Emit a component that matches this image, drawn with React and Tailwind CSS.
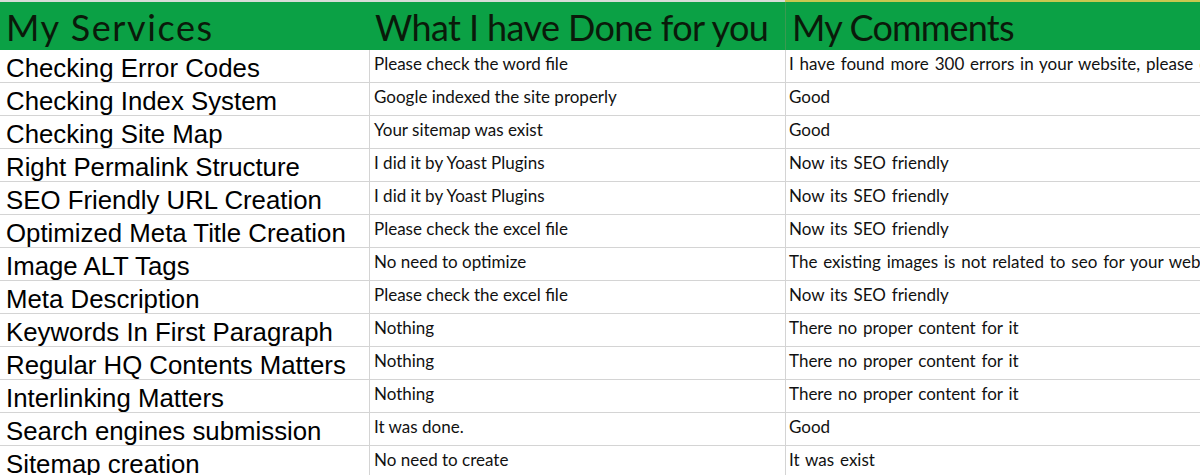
const rows = [
  ["Checking Error Codes", "Please check the word file", "I have found more 300 errors in your website, please check the word file"],
  ["Checking Index System", "Google indexed the site properly", "Good"],
  ["Checking Site Map", "Your sitemap was exist", "Good"],
  ["Right Permalink Structure", "I did it by Yoast Plugins", "Now its SEO friendly"],
  ["SEO Friendly URL Creation", "I did it by Yoast Plugins", "Now its SEO friendly"],
  ["Optimized Meta Title Creation", "Please check the excel file", "Now its SEO friendly"],
  ["Image ALT Tags", "No need to optimize", "The existing images is not related to seo for your website"],
  ["Meta Description", "Please check the excel file", "Now its SEO friendly"],
  ["Keywords In First Paragraph", "Nothing", "There no proper content for it"],
  ["Regular HQ Contents Matters", "Nothing", "There no proper content for it"],
  ["Interlinking Matters", "Nothing", "There no proper content for it"],
  ["Search engines submission", "It was done.", "Good"],
  ["Sitemap creation", "No need to create", "It was exist"],
]

const calibri = "font-['Lato','Open_Sans',sans-serif]"

export default function App() {
  return (
    <div className="h-[475px] w-[1200px] overflow-hidden bg-white">
      <div className="grid grid-cols-[369px_416px_415px]">
        <div className="h-[2px] bg-[#d8dcd8]" />
        <div className="h-[2px] bg-[#d8dcd8]" />
        <div className="h-[2px] bg-[#c8c850]" />
      </div>
      <div className={`grid h-[48px] grid-cols-[369px_416px_415px] bg-[#0ba145] text-[36px] leading-[50px] text-[#0a1a0a] ${calibri}`}>
        <div className="overflow-hidden whitespace-nowrap pl-[6px] tracking-[1.6px]">My Services</div>
        <div className="overflow-hidden whitespace-nowrap pl-[6px] tracking-[-0.6px]">What I have Done for you</div>
        <div className="overflow-hidden whitespace-nowrap border-l border-[#3a9a50] pl-[6px] tracking-[-0.8px]">My Comments</div>
      </div>
      {rows.map(([service, done, comment], i) => (
        <div
          key={i}
          className="grid h-[33px] grid-cols-[369px_416px_415px] border-b border-[#d4d4d4]"
        >
          <div className="overflow-hidden whitespace-nowrap pl-[6px] pt-[4px] font-['Liberation_Sans',Arial,sans-serif] text-[25.8px] leading-[28px] text-black">
            {service}
          </div>
          <div className={`overflow-hidden whitespace-nowrap border-l border-[#d4d4d4] pl-[4px] pt-[3px] text-[17px] leading-[22px] text-[#111] ${calibri}`}>
            {done}
          </div>
          <div className={`overflow-hidden whitespace-nowrap border-l border-[#d4d4d4] pl-[3px] pt-[3px] text-[17px] leading-[22px] text-[#111] [word-spacing:1.5px] ${calibri}`}>
            {comment}
          </div>
        </div>
      ))}
    </div>
  )
}
